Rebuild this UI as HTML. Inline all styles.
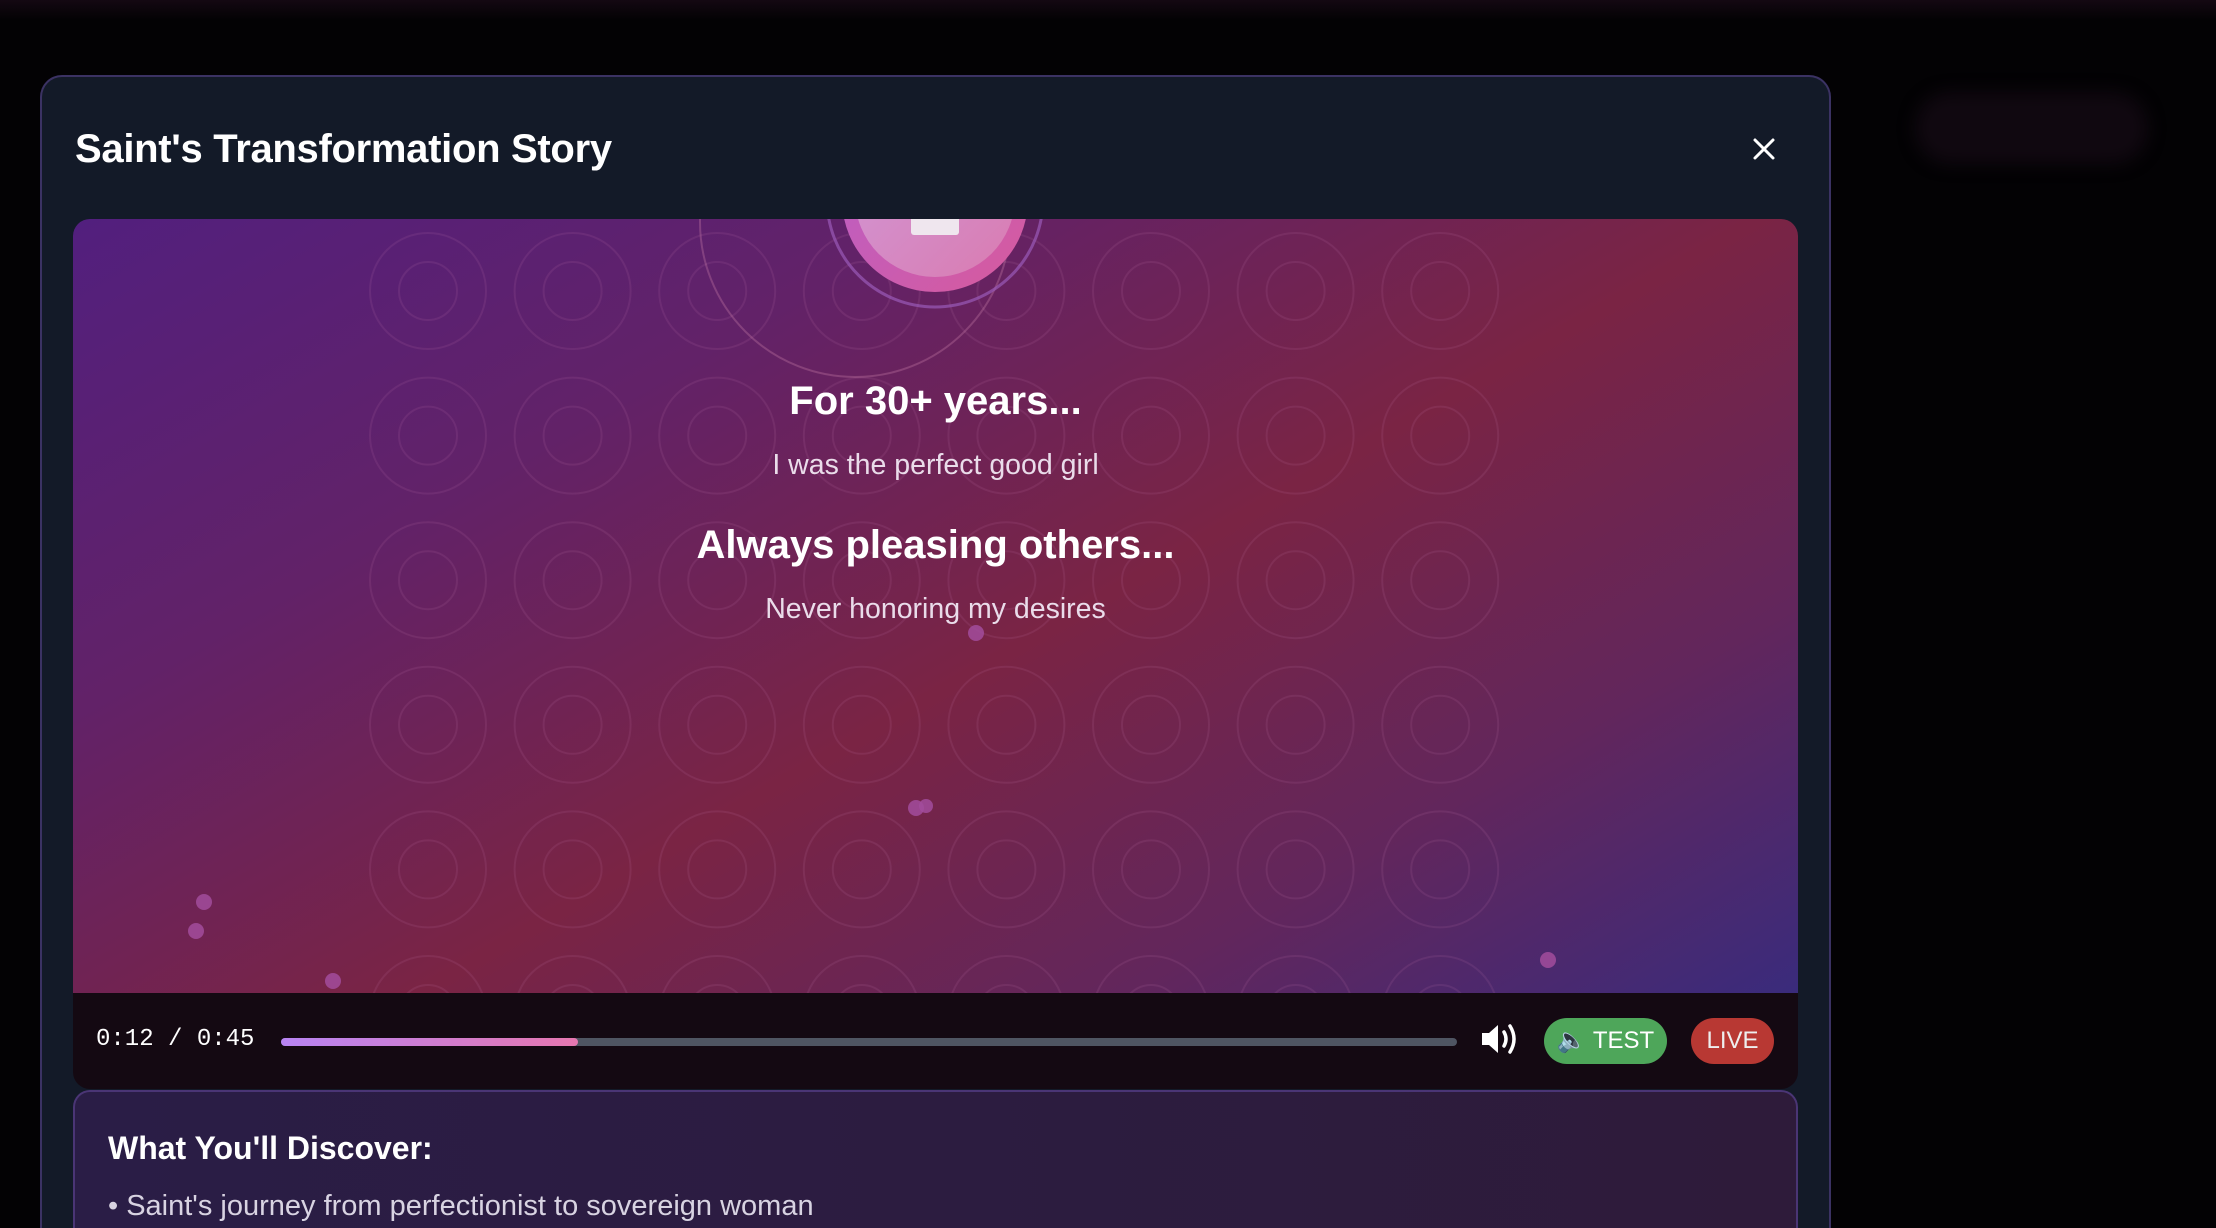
<!DOCTYPE html>
<html><head><meta charset="utf-8"><style>
*{margin:0;padding:0;box-sizing:border-box}
html,body{width:2216px;height:1228px;overflow:hidden}
body{background:#030204;font-family:"Liberation Sans",sans-serif}
#root{position:relative;width:2216px;height:1228px;overflow:hidden}
.topglow{position:absolute;left:0;top:0;width:2216px;height:20px;background:linear-gradient(180deg,#140812,#030204)}
.blurbtn{position:absolute;left:1915px;top:92px;width:233px;height:72px;border-radius:36px;background:#100810;filter:blur(8px)}
.modal{position:absolute;left:40px;top:75px;width:1791px;height:1153px;background:#131a28;border:2px solid #3b3263;border-bottom:none;border-radius:22px 22px 0 0;overflow:hidden}
h1{position:absolute;left:33px;top:50px;font-size:40px;font-weight:bold;color:#fff;letter-spacing:-0.3px}
.close{position:absolute;left:1702px;top:52px}
.video{position:absolute;left:31px;top:142px;width:1725px;height:774px;border-radius:17px 17px 0 0;overflow:hidden;background:linear-gradient(150deg,#521f7e 0%,#622268 28%,#7a2444 55%,#62265c 78%,#3a2b7c 100%)}
.controls{position:absolute;left:31px;top:916px;width:1725px;height:96px;background:#140912;border-radius:0 0 17px 17px}
.time{position:absolute;left:23px;top:33px;font-family:"Liberation Mono",monospace;font-size:24px;color:#fff}
.bar{position:absolute;left:208px;top:45px;width:1176px;height:8px;border-radius:4px;background:#4f5562}
.fill{position:absolute;left:0;top:0;width:297px;height:8px;border-radius:4px;background:linear-gradient(90deg,#b884f3,#e777b0)}
.test{position:absolute;width:123px;height:46px;border-radius:23px;background:#4ea65a;color:#fff;font-size:24px;line-height:46px;text-align:center}
.live{position:absolute;width:83px;height:46px;border-radius:23px;background:#b83833;color:#eee;font-size:24px;line-height:46px;text-align:center}
.disc{position:absolute;left:31px;top:1013px;width:1725px;height:140px;border:2px solid #4a3575;border-bottom:none;border-radius:17px 17px 0 0;background:linear-gradient(90deg,#2a1d46,#2e1b3a)}
.disc h2{position:absolute;left:33px;top:38px;font-size:32px;color:#fff}
.disc p{position:absolute;left:33px;top:98px;font-size:29px;color:#d8d3e2}
.vt{position:absolute;left:0;width:1725px;text-align:center;color:#fff}
</style></head><body><div id="root">
<div class="topglow"></div>
<div class="blurbtn"></div>
<div class="modal">
<h1>Saint's Transformation Story</h1>
<svg class="close" width="40" height="40" viewBox="0 0 40 40"><path d="M11 11L29 29M29 11L11 29" stroke="#fff" stroke-width="3" stroke-linecap="round"/></svg>
<div class="video">
<svg width="1725" height="774" style="position:absolute;left:0;top:0">
<defs><linearGradient id="g1" x1="0" y1="0" x2="1" y2="1"><stop offset="0" stop-color="#b75fcb"/><stop offset="1" stop-color="#d85a9c"/></linearGradient>
<linearGradient id="g2" x1="0" y1="0" x2="1" y2="1"><stop offset="0" stop-color="#d199d9"/><stop offset="1" stop-color="#d97bb0"/></linearGradient></defs>
<g id="pat" fill="none" stroke="#c878b0" stroke-opacity="0.13" stroke-width="2"></g>
<circle cx="782" cy="3" r="155" fill="none" stroke="#c77aa5" stroke-opacity="0.35" stroke-width="2"/>
<circle cx="862" cy="-20" r="108" fill="none" stroke="#9a5ab8" stroke-opacity="0.7" stroke-width="3"/>
<circle cx="862" cy="-20" r="93" fill="url(#g1)"/>
<circle cx="862" cy="-22" r="80" fill="url(#g2)"/>
<rect x="838" y="-10" width="48" height="26" rx="3" fill="#efe6ee"/>
<g fill="#a24c9c" fill-opacity="0.85">
<circle cx="131" cy="683" r="8"/><circle cx="123" cy="712" r="8"/><circle cx="260" cy="762" r="8"/>
<circle cx="903" cy="414" r="8"/><circle cx="843" cy="589" r="8"/><circle cx="853" cy="587" r="7"/><circle cx="1475" cy="741" r="8"/></g>
</svg>
<div class="vt" style="top:160px;font-size:40px;font-weight:bold">For 30+ years...</div>
<div class="vt" style="top:230px;font-size:28.5px;color:#eadcea">I was the perfect good girl</div>
<div class="vt" style="top:304px;font-size:40px;font-weight:bold">Always pleasing others...</div>
<div class="vt" style="top:374px;font-size:28.5px;color:#eadcea">Never honoring my desires</div>
</div>
<div class="controls">
<div class="time">0:12 / 0:45</div>
<div class="bar"><div class="fill"></div></div>
<svg style="position:absolute;left:1406px;top:28px" width="40" height="36" viewBox="0 0 40 36"><path d="M3 12H10L19 4V32L10 24H3Z" fill="#fff"/><path d="M25 11Q29 18 25 25" stroke="#fff" stroke-width="3.5" fill="none" stroke-linecap="round"/><path d="M31 5Q39 18 31 31" stroke="#fff" stroke-width="3.5" fill="none" stroke-linecap="round"/></svg>
</div>
<div class="test" style="top:941px;left:1502px">🔈 TEST</div>
<div class="live" style="top:941px;left:1649px">LIVE</div>
<div class="disc"><h2>What You'll Discover:</h2><p>• Saint's journey from perfectionist to sovereign woman</p></div>
</div>
</div>
<script>
var g=document.getElementById('pat'),s='';
for(var i=0;i<8;i++)for(var j=0;j<6;j++){var x=355+i*144.6,y=72+j*144.6;
s+='<circle cx="'+x+'" cy="'+y+'" r="58"/><circle cx="'+x+'" cy="'+y+'" r="29"/>';}
g.innerHTML=s;
</script>
</body></html>
